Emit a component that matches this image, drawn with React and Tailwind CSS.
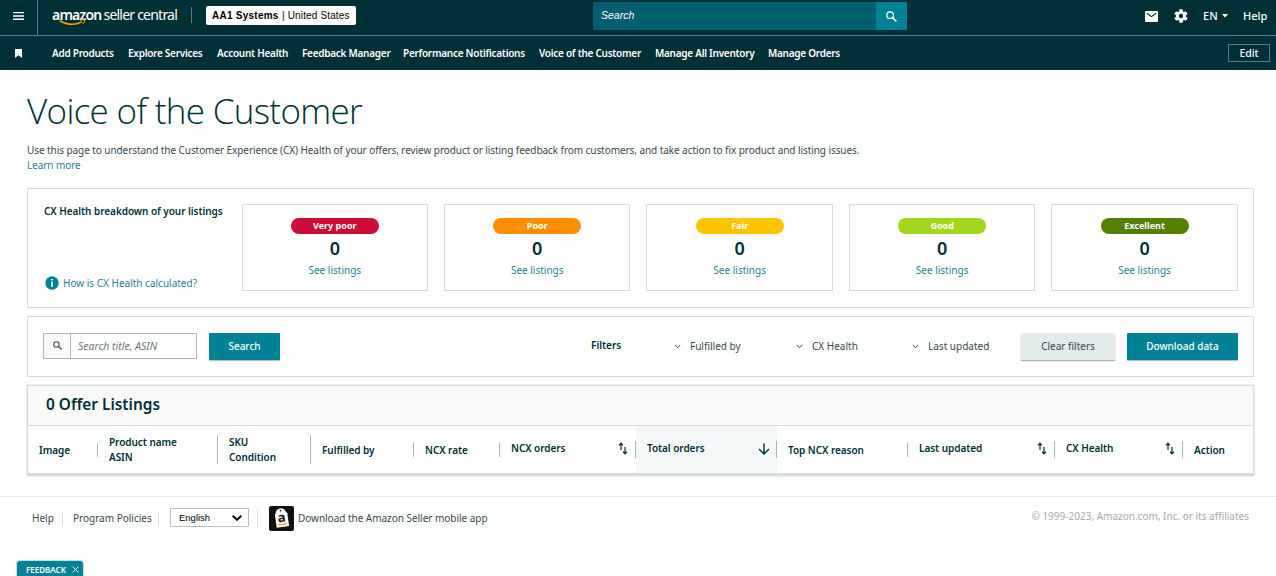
import { Fragment } from 'react'

const NAV_ITEMS = [
  { label: 'Add Products', width: 'w-[62px]' },
  { label: 'Explore Services', width: 'w-[75px]' },
  { label: 'Account Health', width: 'w-[71px]' },
  { label: 'Feedback Manager', width: 'w-[87px]' },
  { label: 'Performance Notifications', width: 'w-[122px]' },
  { label: 'Voice of the Customer', width: 'w-[102px]' },
  { label: 'Manage All Inventory', width: 'w-[99px]' },
  { label: 'Manage Orders', width: 'w-[71px]' },
]

const RATINGS = [
  { label: 'Very poor', color: 'bg-[#cc0c39]' },
  { label: 'Poor', color: 'bg-[#ff8f00]' },
  { label: 'Fair', color: 'bg-[#ffc400]' },
  { label: 'Good', color: 'bg-[#a2d71e]' },
  { label: 'Excellent', color: 'bg-[#538000]' },
]

const COLUMNS = [
  { lines: ['Image'], width: 'w-[70px]' },
  { lines: ['Product name', 'ASIN'], width: 'w-[120px]' },
  { lines: ['SKU', 'Condition'], width: 'w-[93px]' },
  { lines: ['Fulfilled by'], width: 'w-[103px]' },
  { lines: ['NCX rate'], width: 'w-[86px]' },
  { lines: ['NCX orders'], width: 'w-[136px]', sort: 'both' },
  { lines: ['Total orders'], width: 'w-[141px]', sort: 'down' },
  { lines: ['Top NCX reason'], width: 'w-[131px]' },
  { lines: ['Last updated'], width: 'w-[147px]', sort: 'both' },
  { lines: ['CX Health'], width: 'w-[128px]', sort: 'both' },
  { lines: ['Action'], width: 'w-[70px]', last: true },
]

function SearchIcon({ className }) {
  return (
    <svg viewBox="0 0 12 12" fill="none" stroke="currentColor" className={className}>
      <circle cx="4.5" cy="4.5" r="3.6" strokeWidth="1.4" />
      <path d="M7.2 7.2 L11.4 11.4" strokeWidth="1.7" />
    </svg>
  )
}

function Chevron() {
  return (
    <svg viewBox="0 0 7 5" className="h-[5px] w-[7px]" fill="none" stroke="#37474f" strokeWidth="1">
      <path d="M0.8 1 L3.5 3.6 L6.2 1" />
    </svg>
  )
}

function SortIcon({ type }) {
  if (type === 'down') {
    return (
      <svg viewBox="0 0 12 12" className="mb-[2px] mr-[6px] size-3" fill="none" stroke="#002f36" strokeWidth="1.4">
        <path d="M6 0.5 V10.6 M1 6 L6 11 L11 6" />
      </svg>
    )
  }
  return (
    <svg viewBox="0 0 10 13" className="mb-[2px] mr-[7px] h-[13px] w-[10px]" fill="none" stroke="#002f36" strokeWidth="1.2">
      <path d="M3 8 V1.5 M1 3.3 L3 1.2 L5 3.3" />
      <path d="M7 5 V11.5 M5 9.7 L7 11.8 L9 9.7" />
    </svg>
  )
}

function Logo() {
  return (
    <div className="relative ml-[14px] flex h-5 w-[126px] items-center whitespace-nowrap text-white">
      <span className="w-[48px] text-[14px] font-semibold leading-5 tracking-[-0.8px]">amazon</span>
      <span className="ml-[3.5px] text-[14px] leading-5 tracking-[-0.78px]">seller central</span>
      <svg viewBox="0 0 28 8" className="absolute left-[7px] top-[14px] h-2 w-7" fill="none" stroke="#ff9900">
        <path d="M0.5 1.5 Q12 8.5 23 2.8" strokeWidth="1.5" />
        <path d="M21 1.2 Q25 0.2 25.6 1 Q26 2.2 24 5" strokeWidth="1" />
      </svg>
    </div>
  )
}

function Header() {
  return (
    <header className="bg-[#002f36] text-white">
      <div className="flex h-9 items-center border-b border-[#5f7b80]">
        <div className="flex h-[35px] w-[38px] items-center border-r border-[#5f7b80] pl-[13px]">
          <svg viewBox="0 0 11 8" className="mt-[-3px] h-2 w-[11px]" fill="#fff">
            <path d="M0 0h11v1.3H0z M0 3.2h11v1.5H0z M0 6.6h11v1.4H0z" />
          </svg>
        </div>
        <div className="mb-[5px] flex items-center">
          <Logo />
          <div className="ml-[13px] h-4 w-px bg-[#5f7b80]" />
          <div className="ml-[14px] flex h-[19px] w-[150px] items-center whitespace-nowrap rounded-[2px] bg-white pl-[6px] font-['Liberation_Sans',sans-serif] text-[10px] text-black">
            <b className="w-[67px] tracking-[0.25px]">AA1 Systems</b>
            <span className="ml-[3px] tracking-[0.15px]">| United States</span>
          </div>
        </div>
        <div className="mb-[3px] ml-[237px] flex h-7 w-[314px]">
          <div className="flex flex-1 items-center bg-[#005f6e] pl-2 font-['Liberation_Sans',sans-serif] text-[10.5px] italic">
            Search
          </div>
          <div className="flex w-[31px] items-center justify-center bg-[#008296]">
            <SearchIcon className="size-[11px]" />
          </div>
        </div>
        <div className="mb-[3px] ml-auto flex items-center pr-[9px] text-[11px] font-medium">
          <svg viewBox="0 0 13 11" className="h-[11px] w-[13px]">
            <rect width="13" height="11" rx="1" fill="#fff" />
            <path d="M1.8 2.2 L6.5 5.6 L11.2 2.2" fill="none" stroke="#002f36" strokeWidth="1.1" />
          </svg>
          <svg viewBox="0 0 24 24" className="ml-[15px] size-4" fill="#fff">
            <path d="M19.4 13a7.5 7.5 0 0 0 0-2l2.1-1.6a.5.5 0 0 0 .1-.6l-2-3.5a.5.5 0 0 0-.6-.2l-2.5 1a7.3 7.3 0 0 0-1.7-1l-.4-2.6a.5.5 0 0 0-.5-.5h-4a.5.5 0 0 0-.5.5L9.2 5.1a7.3 7.3 0 0 0-1.7 1l-2.5-1a.5.5 0 0 0-.6.2l-2 3.5a.5.5 0 0 0 .1.6L4.6 11a7.5 7.5 0 0 0 0 2l-2.1 1.6a.5.5 0 0 0-.1.6l2 3.5a.5.5 0 0 0 .6.2l2.5-1a7.3 7.3 0 0 0 1.7 1l.4 2.6a.5.5 0 0 0 .5.5h4a.5.5 0 0 0 .5-.5l.4-2.6a7.3 7.3 0 0 0 1.7-1l2.5 1a.5.5 0 0 0 .6-.2l2-3.5a.5.5 0 0 0-.1-.6zM12 15.3a3.3 3.3 0 1 1 0-6.6 3.3 3.3 0 0 1 0 6.6z" />
          </svg>
          <span className="ml-[14px] w-[15px]">EN</span>
          <svg viewBox="0 0 6 4" className="ml-1 h-1 w-[6px]" fill="#fff">
            <path d="M0 0h6L3 3.6z" />
          </svg>
          <span className="ml-[15px] w-6">Help</span>
        </div>
      </div>

      <nav className="flex h-[34px] items-center pl-[15px] pr-[6px]">
        <svg viewBox="0 0 7 9" className="h-[9px] w-[7px]" fill="#fff">
          <path d="M0 0h7v9L3.5 6.2 0 9z" />
        </svg>
        <div className="ml-[30px] mt-px flex gap-[14px] whitespace-nowrap text-[10px] font-semibold tracking-[-0.27px]">
          {NAV_ITEMS.map((item) => (
            <a key={item.label} className={item.width}>{item.label}</a>
          ))}
        </div>
        <button className="ml-auto h-[18px] w-[42px] border border-[#5f7b80] text-[10.5px] font-medium leading-4 tracking-[-0.1px]">
          Edit
        </button>
      </nav>
    </header>
  )
}

function HealthBreakdown() {
  return (
    <section className="flex h-[120px] border border-[#d5dbdb] p-[15px] pl-4">
      <div className="flex w-[197.6px] flex-col justify-between pb-px">
        <h2 className="whitespace-nowrap text-[10px] font-semibold leading-[15px] tracking-[-0.05px]">
          CX Health breakdown of your listings
        </h2>
        <a className="flex items-center gap-1 text-[10px] leading-[15px] text-[#1f7f93]">
          <svg viewBox="0 0 14 14" className="mb-px ml-px size-[14px]">
            <circle cx="7" cy="7" r="6.7" fill="#008296" />
            <path d="M6.2 3h1.7v1.6H6.2z M6.2 5.8h1.7v5H6.2z" fill="#fff" />
          </svg>
          How is CX Health calculated?
        </a>
      </div>
      <div className="flex h-[87px] flex-1 gap-4 pr-[0.2px]">
        {RATINGS.map((rating) => (
          <div key={rating.label} className="flex flex-1 flex-col items-center border border-[#d5dbdb] pt-[13px]">
            <div className={`h-4 w-[88px] rounded-full text-center text-[9px] font-bold leading-4 text-white ${rating.color}`}>
              {rating.label}
            </div>
            <div className="mt-[3px] text-[18px] font-semibold leading-[22px]">0</div>
            <a className="mt-1 text-[10px] leading-[15px] text-[#1f7f93]">See listings</a>
          </div>
        ))}
      </div>
    </section>
  )
}

function FilterBar() {
  return (
    <section className="mt-2 flex h-[61px] items-center border border-[#d5dbdb] px-[15px] text-[10px] text-[#37474f]">
      <div className="mb-px flex h-[26px] w-[154px] border border-[#aab7b8]">
        <div className="flex w-[27px] items-center justify-center border-r border-[#aab7b8] bg-[#fafafa]">
          <SearchIcon className="mb-[2px] size-[9px]" />
        </div>
        <span className="pl-[7px] text-[10.5px] italic leading-[25px] text-[#6c7778]">Search title, ASIN</span>
      </div>
      <button className="ml-3 h-[27px] w-[71px] rounded-[1px] bg-[#008296] font-medium text-white shadow-[0_1px_1px_#aab7b8]">
        Search
      </button>
      <div className="ml-auto flex items-center whitespace-nowrap">
        <b className="mb-[2px] w-[84px] pl-px font-semibold text-[#002f36]">Filters</b>
        <Chevron />
        <span className="ml-[9px] w-[106px]">Fulfilled by</span>
        <Chevron />
        <span className="ml-[9px] w-[100px]">CX Health</span>
        <Chevron />
        <span className="ml-[9px] w-[93px]">Last updated</span>
        <button className="h-[27px] w-[94px] bg-[#e2eaea] shadow-[0_1px_1px_#aab7b8]">Clear filters</button>
        <button className="ml-3 h-[27px] w-[111px] rounded-[1px] bg-[#008296] font-medium text-white shadow-[0_1px_1px_#aab7b8]">
          Download data
        </button>
      </div>
    </section>
  )
}

function dividerHeight(column) {
  if (column.lines.length > 1) return 'h-[29px]'
  return column.sort ? 'h-[17px]' : 'h-[14px]'
}

function ListingsTable() {
  return (
    <section className="mt-2 border border-b-[3px] border-[#d5dbdb] shadow-[0_0_2px_#c4cccc]">
      <h2 className="h-10 border-b border-[#d5dbdb] bg-[#fafafa] pl-[18px] text-[15.4px] font-semibold leading-[37px]">
        0 Offer Listings
      </h2>
      <div className="flex h-[47px]">
        {COLUMNS.map((column) => (
          <div
            key={column.lines[0]}
            className={`flex shrink-0 items-center whitespace-nowrap pl-[11px] text-[10px] font-semibold tracking-[-0.05px] ${column.width} ${column.sort === 'down' ? 'bg-[#f4f8f9]' : ''}`}
          >
            <div className={`flex-1 leading-[15px] ${column.sort ? 'mb-[2px]' : column.lines.length > 1 ? 'mt-px' : 'mt-[2px]'}`}>
              {column.lines.map((line, i) => (
                <Fragment key={line}>
                  {i > 0 && <br />}
                  {line}
                </Fragment>
              ))}
            </div>
            {column.sort && <SortIcon type={column.sort} />}
            {!column.last && <div className={`w-px bg-[#aab7b8] ${dividerHeight(column)}`} />}
          </div>
        ))}
      </div>
    </section>
  )
}

function Footer() {
  return (
    <footer className="mt-5 flex h-[43px] items-center whitespace-nowrap border-t border-[#e3e6e6] pl-8 pr-[27px] text-[10px] text-[#37474f]">
      <a className="w-[30px]">Help</a>
      <div className="h-[15px] w-px bg-[#dcdfdf]" />
      <a className="ml-[10px] w-[85px]">Program Policies</a>
      <div className="h-[15px] w-px bg-[#dcdfdf]" />
      <div className="mb-px ml-[11px] flex h-[19px] w-[79px] items-center justify-between rounded-[1px] border border-[#b9bdbd] pl-[8px] pr-[6px] font-['Liberation_Sans',sans-serif] text-[9.5px] text-black">
        <span className="pt-px">English</span>
        <svg viewBox="0 0 10 6" className="h-[6px] w-[10px]" fill="none" stroke="#000" strokeWidth="1.9">
          <path d="M0.7 0.8 L5 4.8 L9.3 0.8" />
        </svg>
      </div>
      <div className="ml-2 h-[18px] w-px bg-[#dcdfdf]" />
      <div className="ml-[11px] size-[25px]">
        <svg viewBox="0 0 25 25" className="size-[25px]">
          <rect width="25" height="25" rx="2" fill="#111" />
          <g transform="rotate(-8 12.5 12.5)">
            <path d="M8.5 4 Q12.5 0.5 16.5 4 L19 8 V21 H6.5 V8z" fill="#fff" />
            <circle cx="12.6" cy="4.6" r="0.9" fill="#111" />
            <text x="12.7" y="16" fontSize="13" fontWeight="700" textAnchor="middle" fill="#111">a</text>
            <path d="M8.5 17.6 Q13 20 17 17.6" fill="none" stroke="#ff9900" strokeWidth="1.2" />
          </g>
        </svg>
      </div>
      <a className="ml-1 tracking-[-0.03px]">Download the Amazon Seller mobile app</a>
      <span className="mb-1 ml-auto text-[#a5abab]">© 1999-2023, Amazon.com, Inc. or its affiliates</span>
    </footer>
  )
}

export default function App() {
  return (
    <div className="flex h-[576px] flex-col overflow-hidden bg-white font-['Noto_Sans','Open_Sans',sans-serif] text-[#002f36]">
      <Header />
      <main className="pl-[27px] pr-[22px]">
        <h1 className="mt-[19px] h-[44px] whitespace-nowrap font-['Open_Sans','Noto_Sans',sans-serif] text-[35px] font-light leading-[44px] tracking-[-0.67px]">
          Voice of the Customer
        </h1>
        <p className="mt-[10px] h-[45px] whitespace-nowrap text-[10px] leading-[15px] tracking-[-0.07px] text-[#37474f]">
          Use this page to understand the Customer Experience (CX) Health of your offers, review product or listing feedback from customers, and take action to fix product and listing issues.
          <br />
          <a className="text-[#1f7f93]">Learn more</a>
        </p>
        <HealthBreakdown />
        <FilterBar />
        <ListingsTable />
      </main>
      <Footer />
      <div className="ml-4 mt-auto flex h-4 w-[68px] items-center gap-1 rounded-t-[4px] border border-b-0 border-[#c5dfe2] bg-[#008296] pl-[9px] pt-[2px] text-[8px] font-semibold text-white">
        <span className="w-[42px]">FEEDBACK</span>
        <svg viewBox="0 0 7 7" className="size-[7px] shrink-0" stroke="#fff" strokeWidth="0.9">
          <path d="M0.5 0.5 L6.5 6.5 M6.5 0.5 L0.5 6.5" />
        </svg>
      </div>
    </div>
  )
}
